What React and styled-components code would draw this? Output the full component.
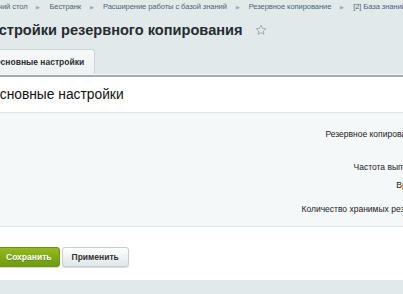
import React from "react";
import styled, { createGlobalStyle } from "styled-components";

const GlobalStyle = createGlobalStyle`
  html, body {
    margin: 0;
    padding: 0;
    background: #e2e9eb;
    overflow: hidden;
  }
  body {
    font-family: "Liberation Sans", Arial, sans-serif;
  }
`;

const Page = styled.div`
  width: 403px;
  height: 294px;
  overflow: hidden;
  background: #e2e9eb;
`;

// the screenshot shows the page scrolled a bit to the right
const Shift = styled.div`
  margin-left: -24px;
  width: 500px;
`;

const Crumbs = styled.div`
  display: flex;
  align-items: center;
  height: 13px;
  padding-left: 5px;
  font-size: 7.6px;
  letter-spacing: -0.1px;
  white-space: nowrap;
`;

const Crumb = styled.span`
  color: #4d6378;
`;

const Sep = styled.span`
  color: #9aa8b2;
  font-size: 5px;
  margin: 0 9px;
`;

const TitleRow = styled.div`
  display: flex;
  align-items: center;
  height: 34px;
  padding-left: 4px;
`;

const Title = styled.h1`
  margin: 0;
  font-size: 14.6px;
  font-weight: bold;
  color: #262c30;
  white-space: nowrap;
`;

const Star = styled.svg`
  margin-left: 12px;
  width: 12px;
  height: 12px;
`;

const Tabs = styled.div`
  display: flex;
  padding-top: 2px;
  height: 25px;
  border-bottom: 1px solid #f4f7f8;
`;

const Tab = styled.div`
  display: flex;
  align-items: center;
  padding: 0 10px 0 17px;
  height: 25px;
  box-sizing: border-box;
  font-size: 8.5px;
  font-weight: bold;
  color: #2b3033;
  background: linear-gradient(#f8fafa, #edf1f2);
  border: 1px solid #cdd5d8;
  border-bottom: none;
  border-radius: 3px 3px 0 0;
`;

const Panel = styled.div`
  border-top: 2px solid #a2acb0;
  background: #fff;
`;

const PanelHead = styled.div`
  height: 35px;
  display: flex;
  align-items: center;
  padding-left: 13px;
  font-size: 13.8px;
  color: #111;
  border-bottom: 1px solid #dfe4e6;
`;

const PanelBody = styled.div`
  background: #f5f8f9;
  padding: 12px 13px 2px 0;
  border-bottom: 1px solid #dce2e4;
`;

const Row = styled.div`
  display: flex;
  justify-content: flex-end;
  align-items: center;
  height: ${(p) => p.h}px;
`;

const Label = styled.span`
  font-size: 8.5px;
  color: #222;
  white-space: nowrap;
`;

const Footer = styled.div`
  display: flex;
  gap: 2px;
  padding: 20px 0 13px 0;
  background: #fff;
`;

const Button = styled.button`
  height: 20px;
  border-radius: 3px;
  font-family: "Liberation Sans", Arial, sans-serif;
  font-size: 8.5px;
  font-weight: bold;
  padding: ${(p) => (p.primary ? "0 7px 0 29px" : "0 9px")};
  border: 1px solid ${(p) => (p.primary ? "#6b9211" : "#c6ced1")};
  color: ${(p) => (p.primary ? "#fff" : "#333")};
  background: ${(p) =>
    p.primary
      ? "linear-gradient(#93ba22, #6e9c0c)"
      : "linear-gradient(#ffffff, #dfe6e8)"};
  box-shadow: 0 1px 1px rgba(0, 0, 0, 0.15);
  text-shadow: ${(p) => (p.primary ? "0 1px 0 rgba(0,0,0,0.25)" : "none")};
`;

const crumbs = [
  "Рабочий стол",
  "Бестранк",
  "Расширение работы с базой знаний",
  "Резервное копирование",
  "[2] База знаний",
];

const rows = [
  { h: 18, text: "Резервное копирование включено:" },
  { h: 15, text: "" },
  { h: 18, text: "Частота выполнения копий:" },
  { h: 18, text: "Время создания:" },
  { h: 30, text: "Количество хранимых резервных копий :" },
];

export default function App() {
  return (
    <Page>
      <GlobalStyle />
      <Shift>
        <Crumbs>
          {crumbs.map((c, i) => (
            <React.Fragment key={c}>
              {i > 0 && <Sep>▶</Sep>}
              <Crumb>{c}</Crumb>
            </React.Fragment>
          ))}
        </Crumbs>
        <TitleRow>
          <Title>Настройки резервного копирования</Title>
          <Star viewBox="0 0 24 24">
            <path
              d="M12 2.5l2.9 6.1 6.6.8-4.9 4.6 1.3 6.6L12 17.3l-5.9 3.3 1.3-6.6-4.9-4.6 6.6-.8z"
              fill="none"
              stroke="#9aa6ad"
              strokeWidth="1.8"
              strokeLinejoin="round"
            />
          </Star>
        </TitleRow>
        <Tabs>
          <Tab>Основные настройки</Tab>
        </Tabs>
        <Panel>
          <PanelHead>Основные настройки</PanelHead>
          <PanelBody>
            {rows.map((r, i) => (
              <Row key={i} h={r.h}>
                <Label>{r.text}</Label>
              </Row>
            ))}
          </PanelBody>
          <Footer>
            <Button primary>Сохранить</Button>
            <Button>Применить</Button>
          </Footer>
        </Panel>
      </Shift>
    </Page>
  );
}
